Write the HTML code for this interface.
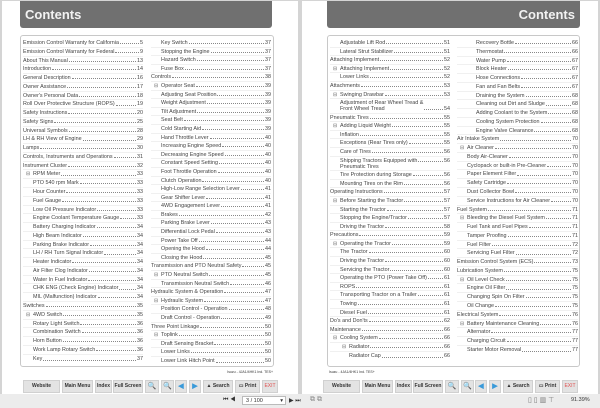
<!DOCTYPE html>
<html><head><meta charset="utf-8"><style>
*{margin:0;padding:0;box-sizing:border-box}
body{width:600px;height:408px;overflow:hidden;background:#d4d4d4;font-family:"Liberation Sans",sans-serif;position:relative}
.pg{position:absolute;top:1px;width:296px;height:393px;background:#fff}
.hd{position:absolute;top:0;height:27px;background:#707070;border-radius:0 0 3px 3px;color:#f2f2f2;font-weight:bold;font-size:13px;line-height:27px;padding:0 5px}
.box{position:absolute;top:34px;height:332px;border:1px solid #c8c8c8;border-radius:3px;background:#fff}
.col{position:absolute;top:3px}
.r{height:8.6px;font-size:5.4px;line-height:8.4px;color:#444;display:flex;position:relative;border-bottom:1px solid #f0f0f0;white-space:nowrap}
.big .r{height:8.78px}
.r.d{height:14.5px;line-height:6.2px;padding-top:1px}
.r span{flex:none}
.r i{flex:1;border-bottom:1px dotted #888;margin:0 1px 2.6px;}
.r.d i{margin-bottom:2.5px}
.r b{font-weight:normal;flex:none}
.l1,.l2{padding-left:10px}.l3{padding-left:19px}
.m:before{content:"⊟";position:absolute;left:3px;font-size:5px;color:#666}
.l3.m:before{left:12px}
.nt{position:absolute;top:369px;font-size:3.5px;color:#333}
.tb{position:absolute;top:379px;height:13px}
.bt{position:absolute;top:0;height:13px;background:#e3e3e3;border:1px solid #d0d0d0;font-size:5px;line-height:11px;text-align:center;color:#333;font-weight:bold}
.bar{position:absolute;left:0;top:394px;width:600px;height:14px;background:#ececec;font-size:5.5px;color:#333}
</style></head><body>

<div class="pg" style="left:2px">
<div class="hd" style="left:18px;width:252px">Contents</div>
<div class="box" style="left:18px;width:254px">
<div class="col big" style="left:2px;width:120px">
<div class="r"><span>Emission Control Warranty for California</span><i></i><b>5</b></div>
<div class="r"><span>Emission Control Warranty for Federal</span><i></i><b>9</b></div>
<div class="r"><span>About This Manual</span><i></i><b>13</b></div>
<div class="r"><span>Introduction</span><i></i><b>14</b></div>
<div class="r"><span>General Description</span><i></i><b>16</b></div>
<div class="r"><span>Owner Assistance</span><i></i><b>17</b></div>
<div class="r"><span>Owner's Personal Data</span><i></i><b>18</b></div>
<div class="r"><span>Roll Over Protective Structure (ROPS)</span><i></i><b>19</b></div>
<div class="r"><span>Safety Instructions</span><i></i><b>20</b></div>
<div class="r"><span>Safety Signs</span><i></i><b>25</b></div>
<div class="r"><span>Universal Symbols</span><i></i><b>28</b></div>
<div class="r"><span>LH &amp; RH View of Engine</span><i></i><b>29</b></div>
<div class="r"><span>Lamps</span><i></i><b>30</b></div>
<div class="r"><span>Controls, Instruments and Operations</span><i></i><b>31</b></div>
<div class="r"><span>Instrument Cluster</span><i></i><b>32</b></div>
<div class="r l1 m"><span>RPM Meter</span><i></i><b>33</b></div>
<div class="r l2"><span>PTO 540 rpm Mark</span><i></i><b>33</b></div>
<div class="r l2"><span>Hour Counter</span><i></i><b>33</b></div>
<div class="r l2"><span>Fuel Gauge</span><i></i><b>33</b></div>
<div class="r l2"><span>Low Oil Pressure Indicator</span><i></i><b>33</b></div>
<div class="r l2"><span>Engine Coolant Temperature Gauge</span><i></i><b>33</b></div>
<div class="r l2"><span>Battery Charging Indicator</span><i></i><b>34</b></div>
<div class="r l2"><span>High Beam Indicator</span><i></i><b>34</b></div>
<div class="r l2"><span>Parking Brake Indicator</span><i></i><b>34</b></div>
<div class="r l2"><span>LH / RH Turn Signal Indicator</span><i></i><b>34</b></div>
<div class="r l2"><span>Heater Indicator</span><i></i><b>34</b></div>
<div class="r l2"><span>Air Filter Clog Indicator</span><i></i><b>34</b></div>
<div class="r l2"><span>Water In Fuel Indicator</span><i></i><b>34</b></div>
<div class="r l2"><span>CHK ENG (Check Engine) Indicator</span><i></i><b>34</b></div>
<div class="r l2"><span>MIL (Malfunction) Indicator</span><i></i><b>34</b></div>
<div class="r"><span>Switches</span><i></i><b>35</b></div>
<div class="r l1 m"><span>4WD Switch</span><i></i><b>35</b></div>
<div class="r l2"><span>Rotary Light Switch</span><i></i><b>36</b></div>
<div class="r l2"><span>Combination Switch</span><i></i><b>36</b></div>
<div class="r l2"><span>Horn Button</span><i></i><b>36</b></div>
<div class="r l2"><span>Work Lamp Rotary Switch</span><i></i><b>36</b></div>
<div class="r l2" style="border:0"><span>Key</span><i></i><b>37</b></div>
</div>
<div class="col" style="left:130px;width:120px">
<div class="r l2"><span>Key Switch</span><i></i><b>37</b></div>
<div class="r l2"><span>Stopping the Engine</span><i></i><b>37</b></div>
<div class="r l2"><span>Hazard Switch</span><i></i><b>37</b></div>
<div class="r l2"><span>Fuse Box</span><i></i><b>37</b></div>
<div class="r"><span>Controls</span><i></i><b>38</b></div>
<div class="r l1 m"><span>Operator Seat</span><i></i><b>39</b></div>
<div class="r l2"><span>Adjusting Seat Position</span><i></i><b>39</b></div>
<div class="r l2"><span>Weight Adjustment</span><i></i><b>39</b></div>
<div class="r l2"><span>Tilt Adjustment</span><i></i><b>39</b></div>
<div class="r l2"><span>Seat Belt</span><i></i><b>39</b></div>
<div class="r l2"><span>Cold Starting Aid</span><i></i><b>39</b></div>
<div class="r l2"><span>Hand Throttle Lever</span><i></i><b>40</b></div>
<div class="r l2"><span>Increasing Engine Speed</span><i></i><b>40</b></div>
<div class="r l2"><span>Decreasing Engine Speed</span><i></i><b>40</b></div>
<div class="r l2"><span>Constant Speed Setting</span><i></i><b>40</b></div>
<div class="r l2"><span>Foot Throttle Operation</span><i></i><b>40</b></div>
<div class="r l2"><span>Clutch Operation</span><i></i><b>40</b></div>
<div class="r l2"><span>High-Low Range Selection Lever</span><i></i><b>41</b></div>
<div class="r l2"><span>Gear Shifter Lever</span><i></i><b>41</b></div>
<div class="r l2"><span>4WD Engagement Lever</span><i></i><b>41</b></div>
<div class="r l2"><span>Brakes</span><i></i><b>42</b></div>
<div class="r l2"><span>Parking Brake Lever</span><i></i><b>43</b></div>
<div class="r l2"><span>Differential Lock Pedal</span><i></i><b>43</b></div>
<div class="r l2"><span>Power Take Off</span><i></i><b>44</b></div>
<div class="r l2"><span>Opening the Hood</span><i></i><b>44</b></div>
<div class="r l2"><span>Closing the Hood</span><i></i><b>45</b></div>
<div class="r"><span>Transmission and PTO Neutral Safety</span><i></i><b>45</b></div>
<div class="r l1 m"><span>PTO Neutral Switch</span><i></i><b>45</b></div>
<div class="r l2"><span>Transmission Neutral Switch</span><i></i><b>46</b></div>
<div class="r"><span>Hydraulic System &amp; Operation</span><i></i><b>47</b></div>
<div class="r l1 m"><span>Hydraulic System</span><i></i><b>47</b></div>
<div class="r l2"><span>Position Control - Operation</span><i></i><b>48</b></div>
<div class="r l2"><span>Draft Control - Operation</span><i></i><b>49</b></div>
<div class="r"><span>Three Point Linkage</span><i></i><b>50</b></div>
<div class="r l1 m"><span>Toplink</span><i></i><b>50</b></div>
<div class="r l2"><span>Draft Sensing Bracket</span><i></i><b>50</b></div>
<div class="r l2"><span>Lower Links</span><i></i><b>50</b></div>
<div class="r l2" style="border:0"><span>Lower Link Hitch Point</span><i></i><b>50</b></div>
</div>
</div>
<div class="nt" style="right:25px">Isuzu - 4JA1/4HK1 Ind. TES+</div>
<div class="tb" style="left:21px">
<div class="bt" style="left:0;width:37px">Website</div>
<div class="bt" style="left:39px;width:31px">Main Menu</div>
<div class="bt" style="left:72px;width:17px">Index</div>
<div class="bt" style="left:90px;width:30px">Full Screen</div>
<div class="bt" style="left:122px;width:14px;font-size:7px">&#x1F50D;</div>
<div class="bt" style="left:138px;width:13px;font-size:7px">&#x1F50D;</div>
<div class="bt" style="left:152px;width:12px;color:#3a9ad9;font-size:7px">◀</div>
<div class="bt" style="left:166px;width:12px;color:#3a9ad9;font-size:7px">▶</div>
<div class="bt" style="left:180px;width:30px">▲ Search</div>
<div class="bt" style="left:212px;width:25px">▭ Print</div>
<div class="bt" style="left:239px;width:16px;color:#e05050;font-weight:normal">EXIT</div>
</div>
</div>

<div class="pg" style="left:302px">
<div class="hd" style="left:25px;width:253px;text-align:right">Contents</div>
<div class="box" style="left:25px;width:253px">
<div class="col" style="left:2px;width:120px">
<div class="r l2"><span>Adjustable Lift Rod</span><i></i><b>51</b></div>
<div class="r l2"><span>Lateral Strut Stabilizer</span><i></i><b>51</b></div>
<div class="r"><span>Attaching Implement</span><i></i><b>52</b></div>
<div class="r l1 m"><span>Attaching Implement</span><i></i><b>52</b></div>
<div class="r l2"><span>Lower Links</span><i></i><b>52</b></div>
<div class="r"><span>Attachments</span><i></i><b>53</b></div>
<div class="r l1 m"><span>Swinging Drawbar</span><i></i><b>53</b></div>
<div class="r l2 d"><span>Adjustment of Rear Wheel Tread &amp;<br>Front Wheel Tread</span><i></i><b style="align-self:flex-end;line-height:6.2px">54</b></div>
<div class="r"><span>Pneumatic Tires</span><i></i><b>55</b></div>
<div class="r l1 m"><span>Adding Liquid Weight</span><i></i><b>55</b></div>
<div class="r l2"><span>Inflation</span><i></i><b>55</b></div>
<div class="r l2"><span>Exceptions (Rear Tires only)</span><i></i><b>55</b></div>
<div class="r l2"><span>Care of Tires</span><i></i><b>56</b></div>
<div class="r l2 d"><span>Shipping Tractors Equipped with<br>Pneumatic Tires</span><i style="margin-bottom:8px"></i><b>56</b></div>
<div class="r l2"><span>Tire Protection during Storage</span><i></i><b>56</b></div>
<div class="r l2"><span>Mounting Tires on the Rim</span><i></i><b>56</b></div>
<div class="r"><span>Operating Instructions</span><i></i><b>57</b></div>
<div class="r l1 m"><span>Before Starting the Tractor</span><i></i><b>57</b></div>
<div class="r l2"><span>Starting the Tractor</span><i></i><b>57</b></div>
<div class="r l2"><span>Stopping the Engine/Tractor</span><i></i><b>57</b></div>
<div class="r l2"><span>Driving the Tractor</span><i></i><b>58</b></div>
<div class="r"><span>Precautions</span><i></i><b>59</b></div>
<div class="r l1 m"><span>Operating the Tractor</span><i></i><b>59</b></div>
<div class="r l2"><span>The Tractor</span><i></i><b>60</b></div>
<div class="r l2"><span>Driving the Tractor</span><i></i><b>60</b></div>
<div class="r l2"><span>Servicing the Tractor</span><i></i><b>60</b></div>
<div class="r l2"><span>Operating the PTO (Power Take Off)</span><i></i><b>61</b></div>
<div class="r l2"><span>ROPS</span><i></i><b>61</b></div>
<div class="r l2"><span>Transporting Tractor on a Trailer</span><i></i><b>61</b></div>
<div class="r l2"><span>Towing</span><i></i><b>61</b></div>
<div class="r l2"><span>Diesel Fuel</span><i></i><b>61</b></div>
<div class="r"><span>Do's and Don'ts</span><i></i><b>62</b></div>
<div class="r"><span>Maintenance</span><i></i><b>66</b></div>
<div class="r l1 m"><span>Cooling System</span><i></i><b>66</b></div>
<div class="r l3 m"><span>Radiator</span><i></i><b>66</b></div>
<div class="r l3" style="border:0"><span>Radiator Cap</span><i></i><b>66</b></div>
</div>
<div class="col big" style="left:129px;width:121px">
<div class="r l3"><span>Recovery Bottle</span><i></i><b>66</b></div>
<div class="r l3"><span>Thermostat</span><i></i><b>66</b></div>
<div class="r l3"><span>Water Pump</span><i></i><b>67</b></div>
<div class="r l3"><span>Block Heater</span><i></i><b>67</b></div>
<div class="r l3"><span>Hose Connections</span><i></i><b>67</b></div>
<div class="r l3"><span>Fan and Fan Belts</span><i></i><b>67</b></div>
<div class="r l3"><span>Draining the System</span><i></i><b>68</b></div>
<div class="r l3"><span>Cleaning out Dirt and Sludge</span><i></i><b>68</b></div>
<div class="r l3"><span>Adding Coolant to the System</span><i></i><b>68</b></div>
<div class="r l3"><span>Cooling System Protection</span><i></i><b>68</b></div>
<div class="r l3"><span>Engine Valve Clearance</span><i></i><b>68</b></div>
<div class="r"><span>Air Intake System</span><i></i><b>70</b></div>
<div class="r l1 m"><span>Air Cleaner</span><i></i><b>70</b></div>
<div class="r l2"><span>Body Air-Cleaner</span><i></i><b>70</b></div>
<div class="r l2"><span>Cyclopack or built-in Pre-Cleaner</span><i></i><b>70</b></div>
<div class="r l2"><span>Paper Element Filter</span><i></i><b>70</b></div>
<div class="r l2"><span>Safety Cartridge</span><i></i><b>70</b></div>
<div class="r l2"><span>Dust Collector Bowl</span><i></i><b>70</b></div>
<div class="r l2"><span>Service Instructions for Air Cleaner</span><i></i><b>70</b></div>
<div class="r"><span>Fuel System</span><i></i><b>71</b></div>
<div class="r l1 m"><span>Bleeding the Diesel Fuel System</span><i></i><b>71</b></div>
<div class="r l2"><span>Fuel Tank and Fuel Pipes</span><i></i><b>71</b></div>
<div class="r l2"><span>Tamper Proofing</span><i></i><b>71</b></div>
<div class="r l2"><span>Fuel Filter</span><i></i><b>72</b></div>
<div class="r l2"><span>Servicing Fuel Filter</span><i></i><b>72</b></div>
<div class="r"><span>Emission Control System (ECS)</span><i></i><b>73</b></div>
<div class="r"><span>Lubrication System</span><i></i><b>75</b></div>
<div class="r l1 m"><span>Oil Level Check</span><i></i><b>75</b></div>
<div class="r l2"><span>Engine Oil Filter</span><i></i><b>75</b></div>
<div class="r l2"><span>Changing Spin On Filter</span><i></i><b>75</b></div>
<div class="r l2"><span>Oil Change</span><i></i><b>75</b></div>
<div class="r"><span>Electrical System</span><i></i><b>76</b></div>
<div class="r l1 m"><span>Battery Maintenance Cleaning</span><i></i><b>76</b></div>
<div class="r l2"><span>Alternator</span><i></i><b>77</b></div>
<div class="r l2"><span>Charging Circuit</span><i></i><b>77</b></div>
<div class="r l2" style="border:0"><span>Starter Motor Removal</span><i></i><b>77</b></div>
</div>
</div>
<div class="nt" style="left:27px">Isuzu - 4JA1/4HK1 Ind. TES+</div>
<div class="tb" style="left:21px">
<div class="bt" style="left:0;width:37px">Website</div>
<div class="bt" style="left:39px;width:31px">Main Menu</div>
<div class="bt" style="left:72px;width:17px">Index</div>
<div class="bt" style="left:90px;width:30px">Full Screen</div>
<div class="bt" style="left:122px;width:14px;font-size:7px">&#x1F50D;</div>
<div class="bt" style="left:138px;width:13px;font-size:7px">&#x1F50D;</div>
<div class="bt" style="left:152px;width:12px;color:#3a9ad9;font-size:7px">◀</div>
<div class="bt" style="left:166px;width:12px;color:#3a9ad9;font-size:7px">▶</div>
<div class="bt" style="left:180px;width:30px">▲ Search</div>
<div class="bt" style="left:212px;width:25px">▭ Print</div>
<div class="bt" style="left:239px;width:16px;color:#e05050;font-weight:normal">EXIT</div>
</div>
</div>

<div class="bar">
<span style="position:absolute;left:223px;top:3px;font-size:6px">⏮ ◀</span>
<div style="position:absolute;left:242px;top:2px;width:44px;height:9px;background:#fff;border:1px solid #bbb;font-size:5.5px;line-height:8px;padding-left:3px">3 / 100<span style="position:absolute;right:2px">▾</span></div>
<span style="position:absolute;left:289px;top:3px;font-size:6px">▶ ⏭</span>
<span style="position:absolute;left:310px;top:2px;font-size:7px;color:#888">⧉ ⧉</span>
<span style="position:absolute;left:528px;top:2px;font-size:7px;color:#777">▯ ▯ ▥ ⊤</span>
<span style="position:absolute;left:571px;top:3px">91.39%</span>
</div>
</body></html>
